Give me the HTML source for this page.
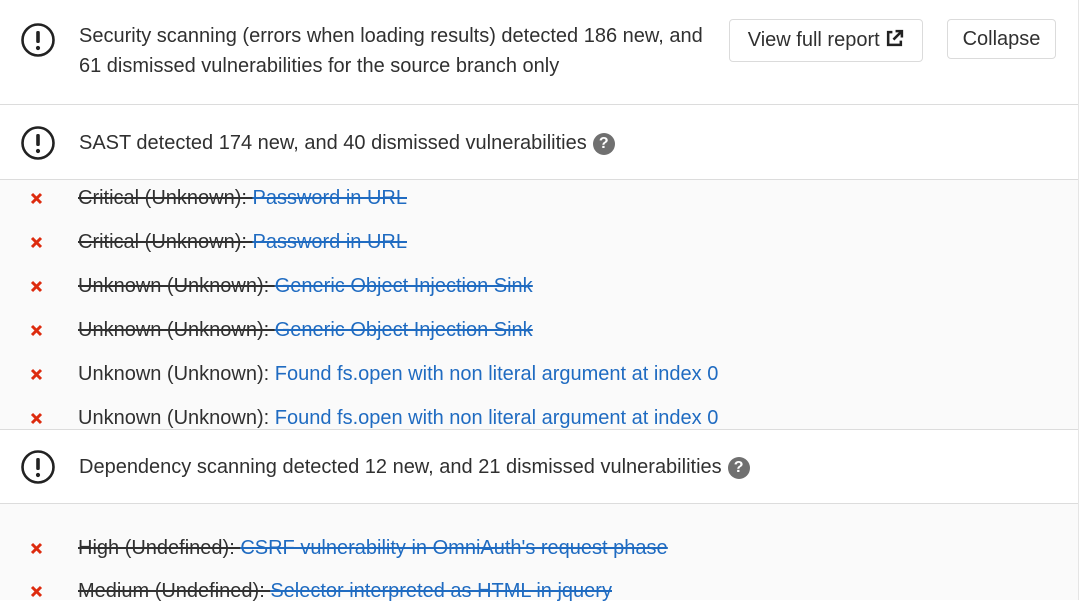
<!DOCTYPE html>
<html><head><meta charset="utf-8"><style>
body{margin:0;width:1080px;height:600px;overflow:hidden;background:#fff;font-family:"Liberation Sans",sans-serif;color:#303030;font-size:20px;position:relative}
.a{position:absolute;white-space:nowrap}
.hr{position:absolute;left:0;width:1078px;height:1px;background:#dcdcdc}
.bg{position:absolute;left:0;width:1078px;background:#fafafa}
.ic{position:absolute;left:20px;width:36px;height:36px}
.x{position:absolute;left:30px;width:13px;height:13px}
.s{text-decoration:line-through}
a{color:#1f6bc1;text-decoration:none}
.btn{position:absolute;border:1px solid #dbdbdb;border-radius:4px;background:#fff;height:43px;box-sizing:border-box;line-height:41px;text-align:center}
.q{display:inline-block;width:22px;height:22px;border-radius:50%;background:#707070;color:#fff;font-size:16px;font-weight:bold;text-align:center;line-height:22px;vertical-align:1px;margin-left:6px}
.rb{position:absolute;left:1078px;top:0;width:1px;height:600px;background:#e5e5e5}
</style></head><body>
<div class="bg" style="top:180px;height:249px"></div>
<div class="bg" style="top:504px;height:96px"></div>
<div class="hr" style="top:104px"></div>
<div class="hr" style="top:179px"></div>
<div class="hr" style="top:429px"></div>
<div class="hr" style="top:503px"></div>
<div class="rb"></div>

<svg class="ic" style="top:22px" viewBox="0 0 36 36"><circle cx="18" cy="18" r="15.5" fill="none" stroke="#222" stroke-width="2.6"/><rect x="16.2" y="9" width="3.6" height="12" rx="1.5" fill="#222"/><circle cx="18" cy="26" r="2.1" fill="#222"/></svg>
<div class="a" style="left:79px;top:21px;line-height:30px">Security scanning (errors when loading results) detected 186 new, and<br>61 dismissed vulnerabilities for the source branch only</div>
<div class="btn" style="left:729px;top:19px;width:194px">View full report <svg width="19" height="19" viewBox="0 0 18 18" style="vertical-align:-2px"><path d="M7 3H3v12h12v-4" fill="none" stroke="#222" stroke-width="2.4"/><path d="M10 2h6v6M16 2L8 10" fill="none" stroke="#222" stroke-width="2.4"/></svg></div>
<div class="btn" style="left:947px;top:19px;width:109px;height:40px;line-height:38px">Collapse</div>

<svg class="ic" style="top:125px" viewBox="0 0 36 36"><circle cx="18" cy="18" r="15.5" fill="none" stroke="#222" stroke-width="2.6"/><rect x="16.2" y="9" width="3.6" height="12" rx="1.5" fill="#222"/><circle cx="18" cy="26" r="2.1" fill="#222"/></svg>
<div class="a" style="left:79px;top:132px">SAST detected 174 new, and 40 dismissed vulnerabilities<span class="q">?</span></div>

<svg class="x" style="top:192px" viewBox="0 0 13 13"><path d="M2 2L11 11M11 2L2 11" stroke="#dd2b0e" stroke-width="3"/></svg><div class="a s" style="left:78px;top:187px">Critical (Unknown): <a class="s">Password in URL </a></div>
<svg class="x" style="top:236px" viewBox="0 0 13 13"><path d="M2 2L11 11M11 2L2 11" stroke="#dd2b0e" stroke-width="3"/></svg><div class="a s" style="left:78px;top:231px">Critical (Unknown): <a class="s">Password in URL </a></div>
<svg class="x" style="top:280px" viewBox="0 0 13 13"><path d="M2 2L11 11M11 2L2 11" stroke="#dd2b0e" stroke-width="3"/></svg><div class="a s" style="left:78px;top:275px">Unknown (Unknown): <a class="s">Generic Object Injection Sink </a></div>
<svg class="x" style="top:324px" viewBox="0 0 13 13"><path d="M2 2L11 11M11 2L2 11" stroke="#dd2b0e" stroke-width="3"/></svg><div class="a s" style="left:78px;top:319px">Unknown (Unknown): <a class="s">Generic Object Injection Sink </a></div>
<svg class="x" style="top:368px" viewBox="0 0 13 13"><path d="M2 2L11 11M11 2L2 11" stroke="#dd2b0e" stroke-width="3"/></svg><div class="a" style="left:78px;top:363px">Unknown (Unknown): <a>Found fs.open with non literal argument at index 0</a></div>
<svg class="x" style="top:412px" viewBox="0 0 13 13"><path d="M2 2L11 11M11 2L2 11" stroke="#dd2b0e" stroke-width="3"/></svg><div class="a" style="left:78px;top:407px">Unknown (Unknown): <a>Found fs.open with non literal argument at index 0</a></div>

<svg class="ic" style="top:449px" viewBox="0 0 36 36"><circle cx="18" cy="18" r="15.5" fill="none" stroke="#222" stroke-width="2.6"/><rect x="16.2" y="9" width="3.6" height="12" rx="1.5" fill="#222"/><circle cx="18" cy="26" r="2.1" fill="#222"/></svg>
<div class="a" style="left:79px;top:456px">Dependency scanning detected 12 new, and 21 dismissed vulnerabilities<span class="q">?</span></div>

<svg class="x" style="top:542px" viewBox="0 0 13 13"><path d="M2 2L11 11M11 2L2 11" stroke="#dd2b0e" stroke-width="3"/></svg><div class="a s" style="left:78px;top:537px">High (Undefined): <a class="s">CSRF vulnerability in OmniAuth's request phase </a></div>
<svg class="x" style="top:585px" viewBox="0 0 13 13"><path d="M2 2L11 11M11 2L2 11" stroke="#dd2b0e" stroke-width="3"/></svg><div class="a s" style="left:78px;top:580px">Medium (Undefined): <a class="s">Selector interpreted as HTML in jquery </a></div>
</body></html>
